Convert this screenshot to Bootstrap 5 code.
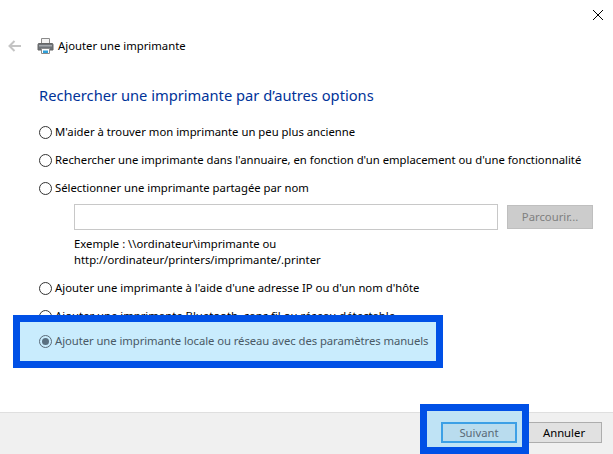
<!DOCTYPE html>
<html lang="fr">
<head>
    <meta charset="UTF-8">
    <meta name="viewport" content="width=device-width, initial-scale=1.0">
    <title>Ajouter une imprimante</title>
    <link href="https://cdn.jsdelivr.net/npm/bootstrap@5.3.0/dist/css/bootstrap.min.css" rel="stylesheet">
    <style>
        html, body { height: 454px; overflow: hidden; }
        body { font-family: "Noto Sans", "Open Sans", sans-serif; font-size: 11.3px; color: #000; background: #fff; position: relative; }
        .wiz { height: 454px; }
        .close-row { height: 36px; padding: 10px 10px 0 0; }
        .head-row { height: 20px; padding-left: 8px; }
        .back-arrow { width: 14px; margin-right: 15px; }
        .printer-ico { margin-right: 4px; }
        .wiz-title { font-size: 14.7px; color: #003399; margin: 29px 0 0 39px; line-height: 20px; height: 33px; font-weight: 400; }
        .opts { padding-left: 39px; }
        .opt { height: 28px; line-height: 28px; white-space: nowrap; }
        .rad { width: 13px; height: 13px; border: 1px solid #333; border-radius: 50%; margin-right: 3px; flex: none; background: #fff; }
        .name-row { padding-left: 35px; height: 26px; margin-top: 2px; }
        .name-input { width: 424px; height: 26px; border: 1px solid #c8c8c8; background: #fff; }
        .browse { width: 86px; height: 24px; margin-left: 9px; background: #ccc; border: 1px solid #bfbfbf; color: #7f7f7f; line-height: 22px; text-align: center; }
        .example { padding-left: 35px; margin-top: 6px; line-height: 16px; height: 38px; }
        .foot { height: 42px; background: #f0f0f0; border-top: 1px solid #dfdfdf; padding: 9px 11px 0 0; margin-top: auto; }
        .win-btn { width: 76px; height: 21px; line-height: 19px; text-align: center; background: #e1e1e1; border: 1px solid #adadad; }
        .win-btn.is-default { border: 2px solid #3ca0e6; background: #b9dcee; color: #5a6a78; line-height: 17px; margin-right: 9px; }
        .hl-box { position: absolute; background: #c9ecfd; border: 7px solid #0050e6; }
        .hl-local { left: 13px; top: 315px; width: 430px; height: 53px; display: flex; align-items: center; padding-left: 19px; color: #4a5a66; white-space: nowrap; letter-spacing: -.07px; }
        .hl-local .rad { border-color: #5a6a78; background: transparent; display: flex; align-items: center; justify-content: center; }
        .hl-local .rad i { display: block; width: 7px; height: 7px; border-radius: 50%; background: #5a7080; }
        .hl-next { left: 420px; top: 404px; width: 109px; height: 50px; background: #bfe3f5; }
        .hl-next .win-btn { position: absolute; left: 14px; top: 11px; }
    </style>
</head>
<body>
    <div class="wiz d-flex flex-column">
        <div class="close-row d-flex justify-content-end">
            <svg width="10" height="10" viewBox="0 0 10 10"><path d="M0 0L10 10M10 0L0 10" stroke="#000" stroke-width="1" fill="none"/></svg>
        </div>
        <div class="head-row d-flex align-items-center">
            <svg class="back-arrow" height="12" viewBox="0 0 14 12"><path d="M13 6H2M6.500 1L1.500 6l5 5" stroke="#c4c4c4" stroke-width="2" fill="none"/></svg>
            <svg class="printer-ico" width="17" height="17" viewBox="0 0 17 17">
                <path d="M4.500 .5h8v6h-8z" fill="#f4f4f4" stroke="#8a8a8a"/>
                <path d="M1.500 5.500h14a1 1 0 0 1 .5 1v5.500H1V6.500a1 1 0 0 1 .5-1z" fill="#6e7378" stroke="#666"/>
                <path d="M2 7h13v1.500H2z" fill="#a4a8ac"/>
                <path d="M4.500 10.500h8v5h-8z" fill="#fff" stroke="#8a8a8a"/>
                <path d="M6 12.500h5V15H6z" fill="#2f9fd8"/>
            </svg>
            <span>Ajouter une imprimante</span>
        </div>
        <h1 class="wiz-title">Rechercher une imprimante par d’autres options</h1>
        <div class="opts">
            <div class="opt d-flex align-items-center"><span class="rad"></span>M'aider à trouver mon imprimante un peu plus ancienne</div>
            <div class="opt d-flex align-items-center"><span class="rad"></span>Rechercher une imprimante dans l'annuaire, en fonction d'un emplacement ou d'une fonctionnalité</div>
            <div class="opt d-flex align-items-center"><span class="rad"></span>Sélectionner une imprimante partagée par nom</div>
            <div class="name-row d-flex align-items-center">
                <div class="name-input"></div>
                <div class="browse">Parcourir...</div>
            </div>
            <div class="example">Exemple : \\ordinateur\imprimante ou<br>http://ordinateur/printers/imprimante/.printer</div>
            <div class="opt d-flex align-items-center"><span class="rad"></span>Ajouter une imprimante à l'aide d'une adresse IP ou d'un nom d'hôte</div>
            <div class="opt d-flex align-items-center"><span class="rad"></span>Ajouter une imprimante Bluetooth, sans fil ou réseau détectable</div>
        </div>
        <div class="foot d-flex justify-content-end">
            <div class="win-btn is-default">Suivant</div>
            <div class="win-btn">Annuler</div>
        </div>
    </div>
    <div class="hl-box hl-local"><span class="rad"><i></i></span>Ajouter une imprimante locale ou réseau avec des paramètres manuels</div>
    <div class="hl-box hl-next"><div class="win-btn is-default">Suivant</div></div>
    <script src="https://cdn.jsdelivr.net/npm/bootstrap@5.3.0/dist/js/bootstrap.bundle.min.js"></script>
</body>
</html>
